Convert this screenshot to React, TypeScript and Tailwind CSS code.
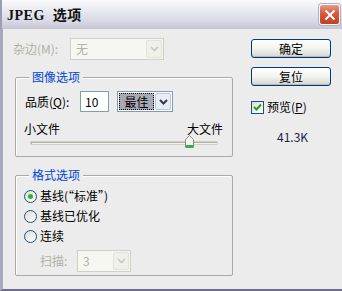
import React from "react";

const font = "font-['Noto_Sans_CJK_SC','Noto_Sans',sans-serif]";

function Chevron({ disabled }: { disabled?: boolean }) {
  return (
    <svg width="9" height="6" viewBox="0 0 9 6">
      <path
        d="M1 1 L4.5 4.5 L8 1"
        fill="none"
        stroke={disabled ? "#c4c4bc" : "#2d3a55"}
        strokeWidth={disabled ? 1.4 : 2}
      />
    </svg>
  );
}

function DisabledSelect({ value, width }: { value: string; width: string }) {
  return (
    <div className={["flex h-[22px] border border-[#cfcfc6] bg-[#f6f6f2] p-[1px]", width].join(" ")}>
      <div className="flex flex-1 items-center pl-[4px] text-[12px] text-[#b3b3aa]">{value}</div>
      <div className="flex w-[16px] items-center justify-center rounded-[2px] border border-[#e2e2da] bg-[#f0f0ea]">
        <Chevron disabled />
      </div>
    </div>
  );
}

function Radio({ checked, label }: { checked?: boolean; label: React.ReactNode }) {
  return (
    <div className="flex h-[20px] items-center gap-[3px]">
      <div className="flex h-[13px] w-[13px] items-center justify-center rounded-full border border-[#1c5180] bg-[linear-gradient(135deg,#dcdcd6,#ffffff)]">
        {checked && <div className="h-[5px] w-[5px] rounded-full bg-[#2fb22f]" />}
      </div>
      <span className="text-[12px] text-black">{label}</span>
    </div>
  );
}

function XpButton({ label }: { label: string }) {
  return (
    <button
      type="button"
      className="flex h-[19px] w-[80px] items-center justify-center rounded-[3px] border border-[#003c74] bg-[linear-gradient(180deg,#ffffff_0%,#f3f3ef_50%,#dcdcd6_90%,#c9c9c2_100%)] text-[12px] leading-none text-black shadow-[inset_0_-1px_0_#b8b8c8]"
    >
      {label}
    </button>
  );
}

export default function App() {
  return (
    <div className={["flex h-[291px] w-[342px] flex-col bg-[#ececec]", font].join(" ")}>
      <div className="flex h-[29px] items-center justify-between border-l-2 border-[#9c9cb4] bg-[linear-gradient(180deg,#fbfbfd_0%,#ececf3_30%,#d8d8e4_75%,#c4c4d4_100%)] pl-[5px] pr-[2px]">
        <span className="font-['Liberation_Serif','Noto_Sans_CJK_SC',serif] text-[14px] font-bold tracking-[0.5px] text-[#111]">
          JPEG&nbsp;&nbsp;<span className="font-['Noto_Sans_CJK_SC',sans-serif]">选项</span>
        </span>
        <div className="flex h-[21px] w-[21px] items-center justify-center rounded-[3px] border border-white bg-[linear-gradient(180deg,#e89a86_0%,#d8583c_45%,#c43e22_100%)] shadow-[0_0_0_1px_#b0b0c0]">
          <svg width="12" height="12" viewBox="0 0 12 12">
            <path d="M1.5 1.5 L10.5 10.5 M10.5 1.5 L1.5 10.5" stroke="white" strokeWidth="2" />
          </svg>
        </div>
      </div>

      <div className="flex flex-1 border-b-2 border-l-[3px] border-b-[#6e6e88] border-l-[#a8a8bc]">
        <div className="w-[230px] pl-[10px] pt-[9px]">
          <div className="flex h-[22px] items-center">
            <span className="w-[57px] text-[12px] text-[#b0b0a8]">杂边(M):</span>
            <DisabledSelect value="无" width="w-[94px]" />
          </div>

          <div className="relative ml-[2px] mt-[17px] h-[80px] w-[218px] rounded-[2px] border border-[#a9a9a9] shadow-[inset_1px_1px_0_#ffffff]">
            <span className="absolute left-[13px] top-[-9px] bg-[#ececec] px-[3px] text-[12px] leading-[16px] text-[#0046d5]">图像选项</span>
            <div className="flex items-center pl-[9px] pt-[13px]">
              <span className="w-[55px] text-[12px] text-black">
                品质(<span className="underline">Q</span>):
              </span>
              <div className="flex h-[21px] w-[29px] items-center border border-[#7f9db9] bg-white pl-[4px] text-[12px]">10</div>
              <div className="ml-[8px] flex h-[21px] w-[56px] border border-[#7f9db9] bg-white p-[1px]">
                <div className="flex flex-1 items-center justify-center border border-dotted border-black bg-[#a9a9b4] text-[12px]">最佳</div>
                <div className="ml-[1px] flex w-[16px] items-center justify-center rounded-[2px] border border-[#b9c6de] bg-[#e8ecf6]">
                  <Chevron />
                </div>
              </div>
            </div>
            <div className="mt-[9px] flex justify-between pl-[8px] pr-[9px] text-[12px] leading-[16px] text-black">
              <span>小文件</span>
              <span>大文件</span>
            </div>
            <div className="relative ml-[14px] mt-[4px] h-[4px] w-[188px] rounded-[1px] border border-[#d0d0c8] bg-[#f4f4ee] shadow-[inset_1px_1px_0_#b0b0a8]">
              <div className="absolute left-[154px] top-[-7px] h-[13px] w-[9px]">
                <svg width="9" height="13" viewBox="0 0 9 13">
                  <path d="M0.5 4.5 L4.5 0.5 L8.5 4.5 L8.5 12.5 L0.5 12.5 Z" fill="#f3f3ef" stroke="#8a8a80" />
                  <rect x="1" y="10" width="7" height="2.5" fill="#2eb14a" />
                </svg>
              </div>
            </div>
          </div>

          <div className="relative ml-[2px] mt-[18px] h-[101px] w-[218px] rounded-[2px] border border-[#a9a9a9] shadow-[inset_1px_1px_0_#ffffff]">
            <span className="absolute left-[13px] top-[-9px] bg-[#ececec] px-[3px] text-[12px] leading-[16px] text-[#0046d5]">格式选项</span>
            <div className="pl-[8px] pt-[10px]">
              <Radio checked label="基线(“标准”)" />
              <Radio label="基线已优化" />
              <Radio label="连续" />
              <div className="mt-[4px] flex items-center pl-[16px]">
                <span className="w-[37px] text-[12px] text-[#b0b0a8]">扫描:</span>
                <DisabledSelect value="3" width="w-[54px]" />
              </div>
            </div>
          </div>
        </div>

        <div className="flex flex-col pl-[18px] pt-[10px]">
          <XpButton label="确定" />
          <div className="mt-[9px]">
            <XpButton label="复位" />
          </div>
          <div className="mt-[12px] flex items-center gap-[3px]">
            <div className="flex h-[13px] w-[13px] items-center justify-center border border-[#1c5180] bg-[linear-gradient(135deg,#dcdcd6,#ffffff)]">
              <svg width="9" height="8" viewBox="0 0 9 8">
                <path d="M1 4 L3.5 6.5 L8 1.5" fill="none" stroke="#21a121" strokeWidth="2" />
              </svg>
            </div>
            <span className="text-[12px] text-black">
              预览(<span className="underline">P</span>)
            </span>
          </div>
          <div className="mt-[14px] pl-[26px] text-[12px] leading-[14px] text-[#1a2548]">41.3K</div>
        </div>
      </div>
    </div>
  );
}
